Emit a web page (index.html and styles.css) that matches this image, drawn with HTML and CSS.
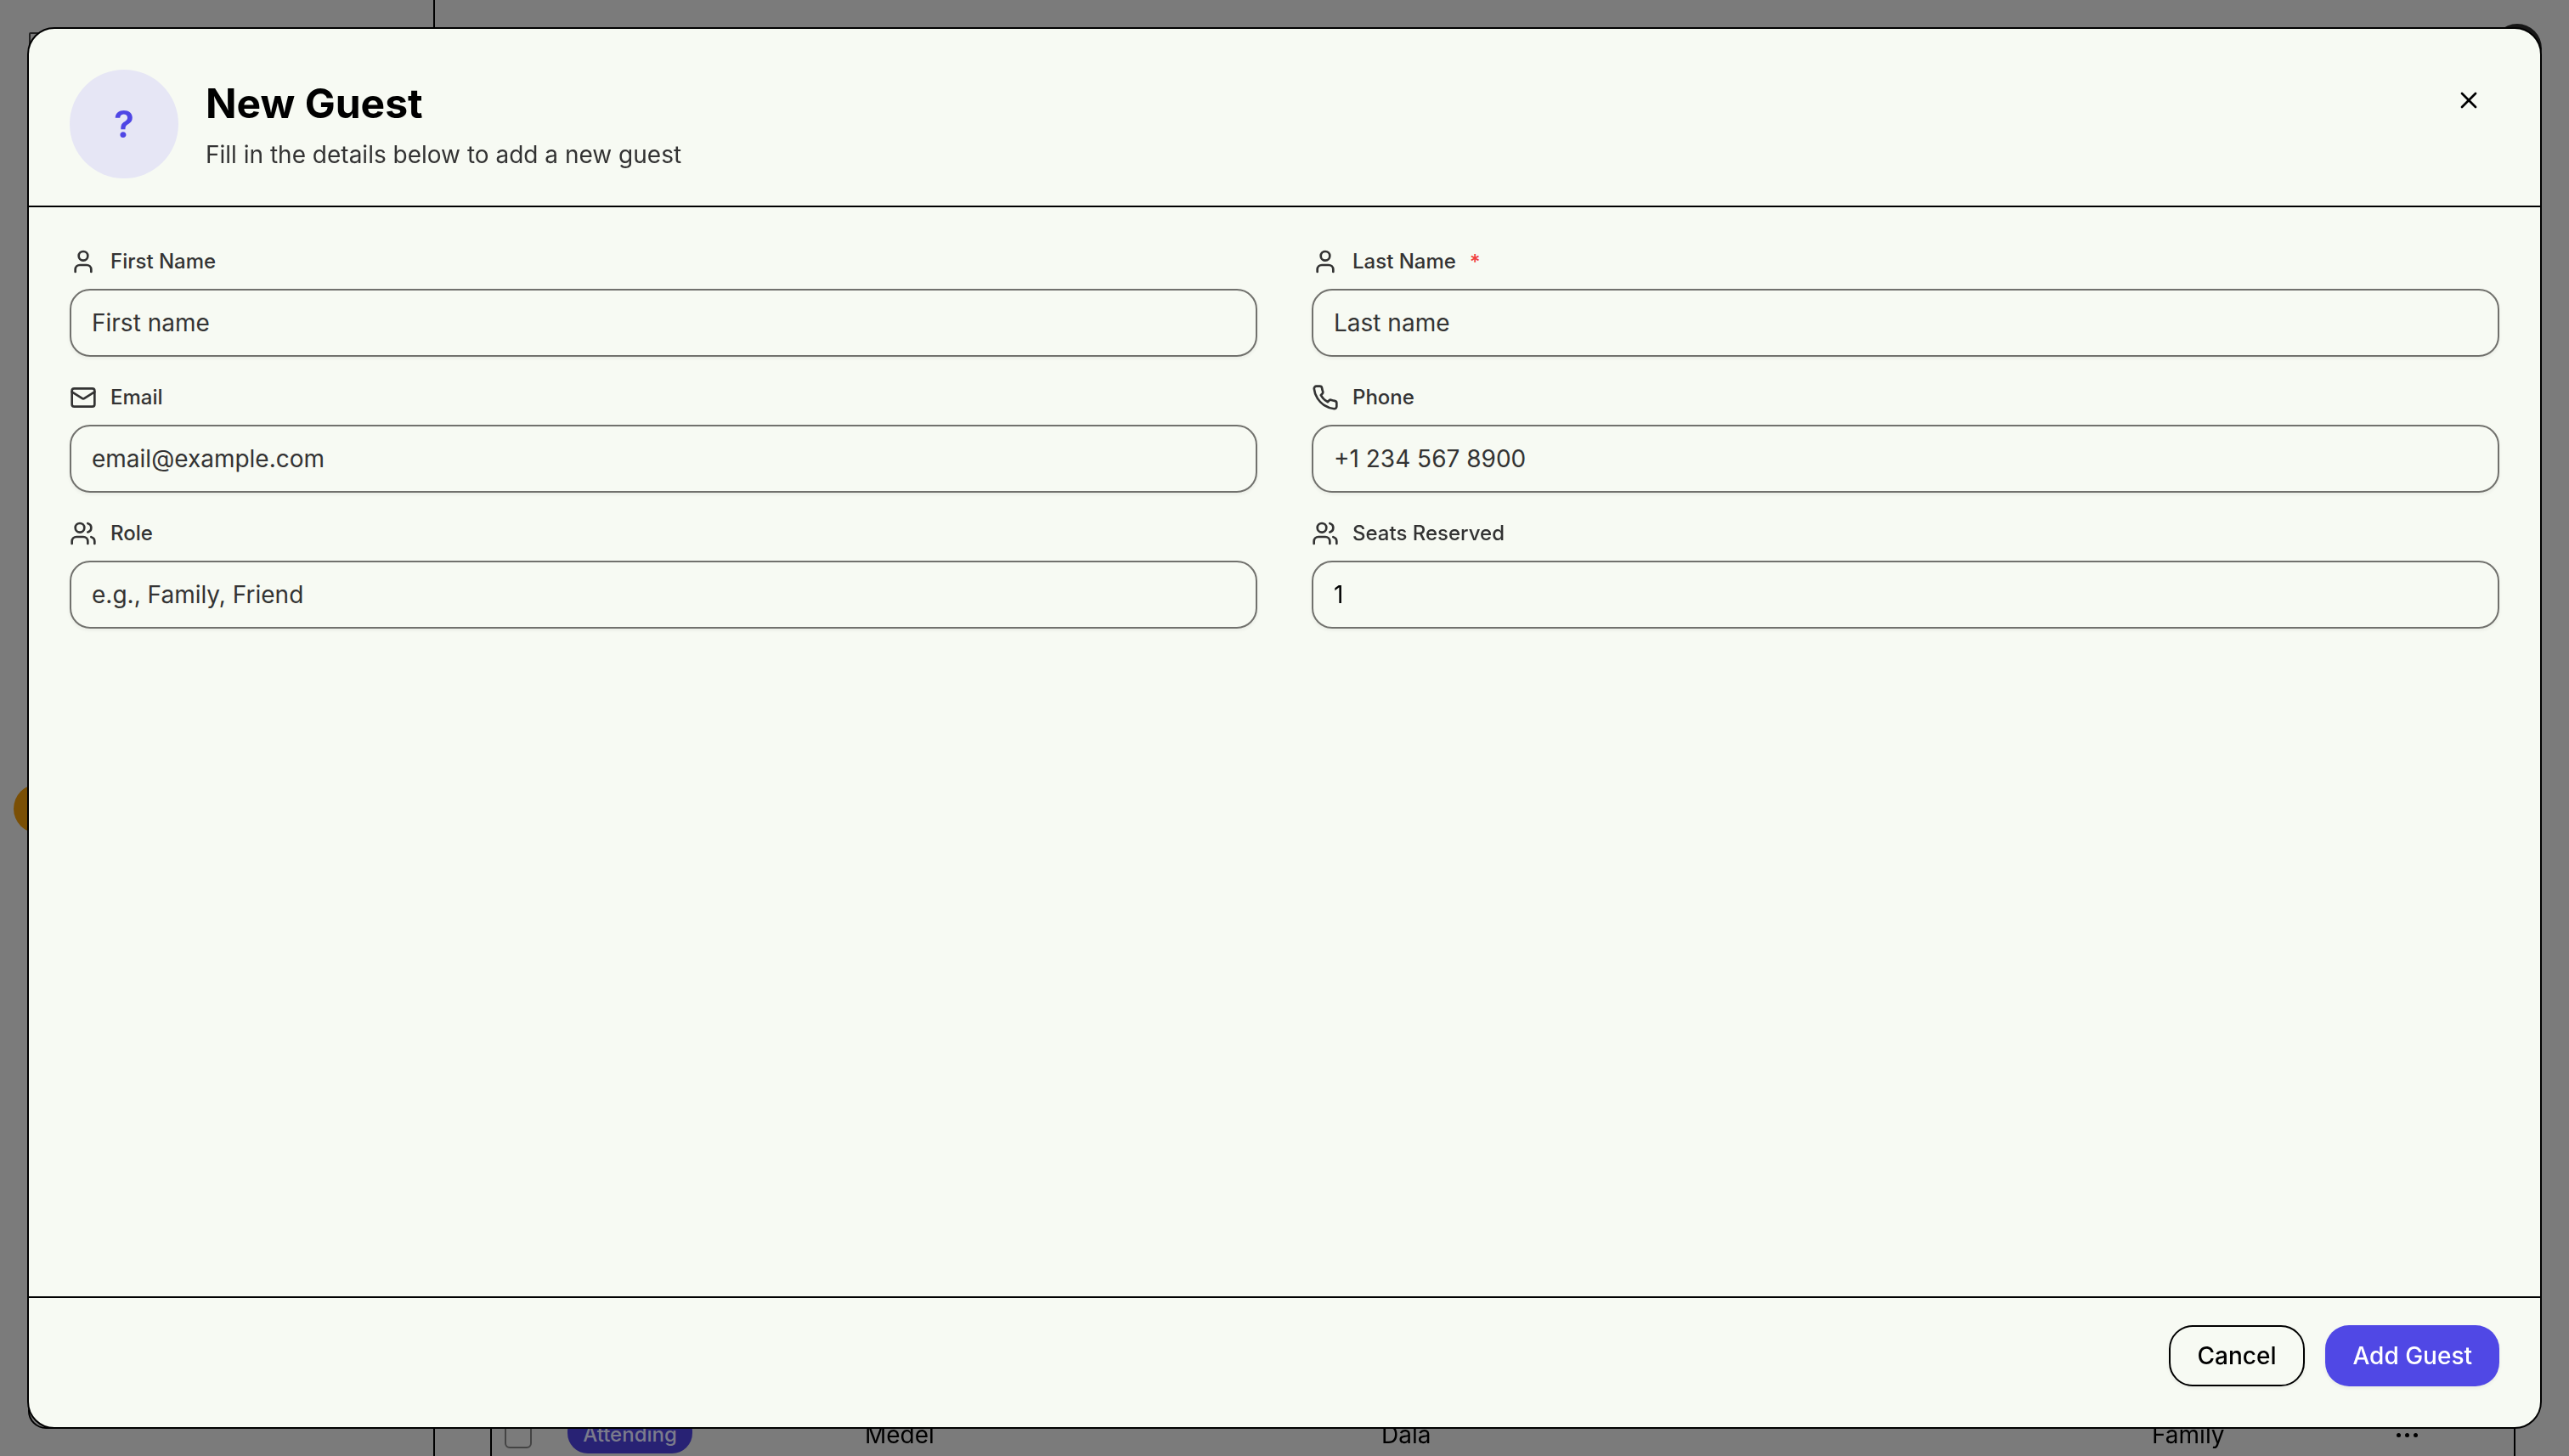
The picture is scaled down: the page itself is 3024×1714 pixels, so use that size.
FILE: index.html
```html
<!DOCTYPE html>
<html lang="en">
<head>
<meta charset="utf-8">
<title>New Guest</title>
<link rel="stylesheet" href="styles.css">
</head>
<body>
<div class="backdrop" aria-hidden="true">
  <span class="bd-sidebar-line"></span>
  <span class="bd-panel-line"></span>
  <span class="bd-panel-line-right"></span>
  <span class="bd-corner"></span>
  <span class="bd-avatar-top"></span>
  <span class="bd-avatar-left"></span>
  <span class="bd-corner-bottom"></span>
  <span class="bd-check"></span>
  <span class="bd-badge">Attending</span>
  <span class="bd-cell bd-first">Medel</span>
  <span class="bd-cell bd-last">Dala</span>
  <span class="bd-cell bd-role">Family</span>
  <span class="bd-dots"><i></i><i></i><i></i></span>
</div>

<main class="modal">
  <header class="modal-header">
    <div class="avatar">?</div>
    <div class="heading">
      <h1 class="title">New Guest</h1>
      <p class="subtitle">Fill in the details below to add a new guest</p>
    </div>
    <button class="close" type="button" aria-label="Close">
      <svg class="icon" viewBox="0 0 24 24"><path d="M18 6 6 18"/><path d="m6 6 12 12"/></svg>
    </button>
  </header>

  <form class="form">
    <div class="field">
      <label class="label">
        <svg class="icon" viewBox="0 0 24 24"><path d="M19 21v-2a4 4 0 0 0-4-4H9a4 4 0 0 0-4 4v2"/><circle cx="12" cy="7" r="4"/></svg>
        <span class="label-text">First Name</span>
      </label>
      <div class="input placeholder">First name</div>
    </div>
    <div class="field">
      <label class="label">
        <svg class="icon" viewBox="0 0 24 24"><path d="M19 21v-2a4 4 0 0 0-4-4H9a4 4 0 0 0-4 4v2"/><circle cx="12" cy="7" r="4"/></svg>
        <span class="label-text">Last Name</span>
        <span class="required">*</span>
      </label>
      <div class="input placeholder">Last name</div>
    </div>
    <div class="field">
      <label class="label">
        <svg class="icon" viewBox="0 0 24 24"><rect x="2" y="4" width="20" height="16" rx="2"/><path d="m22 7-8.97 5.7a1.94 1.94 0 0 1-2.06 0L2 7"/></svg>
        <span class="label-text">Email</span>
      </label>
      <div class="input placeholder">email@example.com</div>
    </div>
    <div class="field">
      <label class="label">
        <svg class="icon" viewBox="0 0 24 24"><path d="M22 16.92v3a2 2 0 0 1-2.18 2 19.79 19.79 0 0 1-8.63-3.07 19.5 19.5 0 0 1-6-6 19.79 19.79 0 0 1-3.07-8.67A2 2 0 0 1 4.11 2h3a2 2 0 0 1 2 1.72 12.84 12.84 0 0 0 .7 2.81 2 2 0 0 1-.45 2.11L8.09 9.91a16 16 0 0 0 6 6l1.27-1.27a2 2 0 0 1 2.11-.45 12.84 12.84 0 0 0 2.81.7A2 2 0 0 1 22 16.92z"/></svg>
        <span class="label-text">Phone</span>
      </label>
      <div class="input placeholder">+1 234 567 8900</div>
    </div>
    <div class="field">
      <label class="label">
        <svg class="icon" viewBox="0 0 24 24"><path d="M16 21v-2a4 4 0 0 0-4-4H6a4 4 0 0 0-4 4v2"/><circle cx="9" cy="7" r="4"/><path d="M22 21v-2a4 4 0 0 0-3-3.87"/><path d="M16 3.13a4 4 0 0 1 0 7.75"/></svg>
        <span class="label-text">Role</span>
      </label>
      <div class="input placeholder">e.g., Family, Friend</div>
    </div>
    <div class="field">
      <label class="label">
        <svg class="icon" viewBox="0 0 24 24"><path d="M16 21v-2a4 4 0 0 0-4-4H6a4 4 0 0 0-4 4v2"/><circle cx="9" cy="7" r="4"/><path d="M22 21v-2a4 4 0 0 0-3-3.87"/><path d="M16 3.13a4 4 0 0 1 0 7.75"/></svg>
        <span class="label-text">Seats Reserved</span>
      </label>
      <div class="input value">1</div>
    </div>
  </form>

  <footer class="modal-footer">
    <button class="btn btn-cancel" type="button">Cancel</button>
    <button class="btn btn-primary" type="button">Add Guest</button>
  </footer>
</main>
</body>
</html>
```
FILE: styles.css
```css
* { box-sizing: border-box; }
html, body { height: 100%; }
body {
  margin: 0;
  padding: 32px;
  background: #7b7b7b;
  font-family: Inter, "Liberation Sans", sans-serif;
  overflow: hidden;
}

/* Dimmed application visible behind the dialog */
.backdrop { position: fixed; inset: 0; overflow: hidden; }
.backdrop > * { position: absolute; }
.bd-sidebar-line { left: 510px; top: 0; width: 2px; height: 1714px; background: #000; }
.bd-panel-line { left: 577px; top: 1600px; width: 2px; height: 114px; background: #000; }
.bd-panel-line-right { left: 2959px; top: 1600px; width: 2px; height: 114px; background: #000; }
.bd-corner { left: 34px; top: 38px; width: 40px; height: 40px; border: 2px solid #222; border-radius: 2px; }
.bd-avatar-top { left: 2934px; top: 28px; width: 58px; height: 58px; border-radius: 50%; background: #161616; }
.bd-avatar-left { left: 16px; top: 923px; width: 58px; height: 58px; border-radius: 50%; background: #7a4f05; }
.bd-corner-bottom { left: 33px; top: 1640px; width: 50px; height: 42px; border: 2px solid #000; border-radius: 32px; }
.bd-check { left: 594px; top: 1660px; width: 32px; height: 45px; border: 2px solid #444; border-radius: 6px; }
.bd-badge { left: 668px; top: 1660px; width: 147px; height: 51px; padding-top: 5px; border-radius: 24px; background: #282274; color: #7b7b8c; font-size: 24px; font-weight: 500; display: flex; align-items: center; justify-content: center; }
.bd-cell { top: 1672px; font-size: 28px; color: #000; line-height: 34px; }
.bd-first { left: 1018px; }
.bd-last { left: 1626px; }
.bd-role { left: 2533px; }
.bd-dots { left: 2821px; top: 1687px; display: flex; gap: 5px; }
.bd-dots i { width: 5px; height: 5px; border-radius: 50%; background: #000; }

/* Dialog */
.modal {
  position: relative;
  display: flex;
  flex-direction: column;
  width: 2960px;
  height: 1650px;
  background: #f7faf3;
  border: 2px solid #000;
  border-radius: 32px;
  color: #000;
}
.modal-header {
  position: relative;
  display: flex;
  align-items: flex-start;
  gap: 32px;
  padding: 48px 48px 32px;
  border-bottom: 2px solid #000;
}
.avatar {
  width: 128px;
  height: 128px;
  border-radius: 50%;
  background: #e6e6f5;
  color: #4f46e5;
  font-size: 44px;
  font-weight: 600;
  display: flex;
  align-items: center;
  justify-content: center;
}
.heading { padding-top: 12px; }
.title { margin: 0; font-size: 48px; line-height: 56px; font-weight: 700; color: #000; }
.subtitle { margin: 12px 0 0; font-size: 28px; line-height: 40px; color: #333; }
.icon { width: 32px; height: 32px; fill: none; stroke: currentColor; stroke-width: 2; stroke-linecap: round; stroke-linejoin: round; flex: none; }
.close {
  position: absolute;
  top: 52px;
  right: 52px;
  display: flex;
  padding: 16px;
  background: none;
  border: 0;
  color: #000;
}
.form {
  flex: 1;
  display: grid;
  grid-template-columns: 1fr 1fr;
  column-gap: 64px;
  row-gap: 32px;
  align-content: start;
  padding: 48px;
}
.field { display: flex; flex-direction: column; gap: 16px; }
.label { display: flex; align-items: center; gap: 16px; height: 32px; font-size: 24px; font-weight: 500; color: #333; }
.label-text { margin-bottom: 2px; }
.required { color: #f04040; margin-left: 0; }
.input {
  height: 80px;
  padding: 0 24px;
  display: flex;
  align-items: center;
  font-size: 28px;
  border: 2px solid #71716d;
  border-radius: 24px;
  box-shadow: 0 2px 4px rgba(0, 0, 0, .06);
}
.placeholder { color: #333; }
.value { color: #000; }
.modal-footer {
  display: flex;
  justify-content: flex-end;
  gap: 24px;
  padding: 32px 48px 48px;
  border-top: 2px solid #000;
}
.btn {
  height: 72px;
  padding: 0 32px;
  border-radius: 28px;
  font-family: inherit;
  font-size: 28px;
  font-weight: 500;
  box-shadow: 0 2px 4px rgba(0, 0, 0, .06);
}
.btn-cancel { background: #f7faf3; border: 2px solid #000; color: #000; }
.btn-primary { background: #5048e5; border: 0; color: #fff; }
```
